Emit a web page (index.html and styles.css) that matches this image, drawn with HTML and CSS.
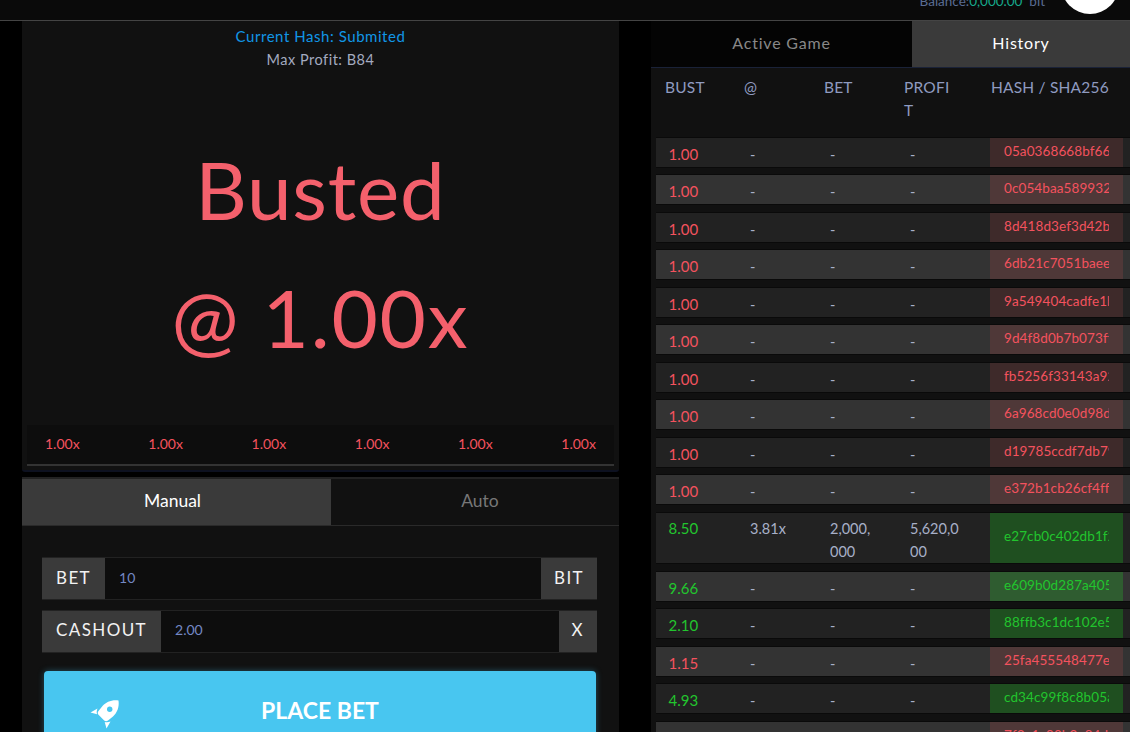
FILE: index.html
```html
<!DOCTYPE html>
<html lang="en">
<head>
<meta charset="utf-8">
<title>Crash game</title>
<link rel="stylesheet" href="styles.css">
</head>
<body>
<header class="topbar">
  <div class="balance">Balance:<span class="balance-num">0,000.00</span>&nbsp; bit</div>
  <div class="avatar"></div>
</header>
<main class="layout">
  <section class="left">
    <div class="game-panel">
      <div class="hash-line">Current Hash: Submited</div>
      <div class="profit-line">Max Profit: B84</div>
      <div class="busted">Busted</div>
      <div class="busted at">@ 1.00x</div>
      <div class="recent">
        <span>1.00x</span><span>1.00x</span><span>1.00x</span><span>1.00x</span><span>1.00x</span><span>1.00x</span>
      </div>
    </div>
    <div class="bet-panel">
      <div class="tabs bet-tabs">
        <div class="tab on">Manual</div>
        <div class="tab">Auto</div>
      </div>
      <div class="form">
        <div class="group">
          <div class="addon">BET</div>
          <div class="field">10</div>
          <div class="addon">BIT</div>
        </div>
        <div class="group">
          <div class="addon">CASHOUT</div>
          <div class="field">2.00</div>
          <div class="addon">X</div>
        </div>
        <div class="place">
          <svg class="rocket" viewBox="0 0 32 32" aria-hidden="true">
            <path fill="#fff" d="M29.500 2.500C23 1.500 17 4 13.500 8L9.500 13c-1 1.200-1 2.700 0 3.800l5.700 5.700c1.100 1 2.600 1 3.800 0l5-4C28 15 30.500 9 29.500 2.500z"/>
            <circle cx="20.700" cy="11.300" r="2.700" fill="#48c6f0"/>
            <path fill="#fff" d="M8.500 10.500 1.500 14.500l6.500 1.800c-.5-2-.3-4 .5-5.800zM21.500 23.500l-4 7-1.800-6.500c2 .5 4 .3 5.800-.5z"/>
          </svg>
          <span class="place-label">PLACE BET</span>
        </div>
      </div>
    </div>
  </section>
  <section class="right">
    <div class="tabs side-tabs">
      <div class="tab">Active Game</div>
      <div class="tab on">History</div>
    </div>
    <div class="history">
      <div class="head">
        <div class="c1">BUST</div><div class="c2">@</div><div class="c3">BET</div><div class="c4">PROFI<br>T</div><div class="c5">HASH / SHA256</div>
      </div>
      <div class="row lose"><div class="c1">1.00</div><div class="c2">-</div><div class="c3">-</div><div class="c4">-</div><div class="c5"><span>05a0368668bf66b9c1e2d4</span></div></div>
      <div class="row lose"><div class="c1">1.00</div><div class="c2">-</div><div class="c3">-</div><div class="c4">-</div><div class="c5"><span>0c054baa589932e7a1f0c3</span></div></div>
      <div class="row lose"><div class="c1">1.00</div><div class="c2">-</div><div class="c3">-</div><div class="c4">-</div><div class="c5"><span>8d418d3ef3d42b27c9a0e1</span></div></div>
      <div class="row lose"><div class="c1">1.00</div><div class="c2">-</div><div class="c3">-</div><div class="c4">-</div><div class="c5"><span>6db21c7051baeef3d8b2a4</span></div></div>
      <div class="row lose"><div class="c1">1.00</div><div class="c2">-</div><div class="c3">-</div><div class="c4">-</div><div class="c5"><span>9a549404cadfe1b7c3d2f0</span></div></div>
      <div class="row lose"><div class="c1">1.00</div><div class="c2">-</div><div class="c3">-</div><div class="c4">-</div><div class="c5"><span>9d4f8d0b7b073ff1a2e6c9</span></div></div>
      <div class="row lose"><div class="c1">1.00</div><div class="c2">-</div><div class="c3">-</div><div class="c4">-</div><div class="c5"><span>fb5256f33143a92c0d7e1b</span></div></div>
      <div class="row lose"><div class="c1">1.00</div><div class="c2">-</div><div class="c3">-</div><div class="c4">-</div><div class="c5"><span>6a968cd0e0d98d4b1f3a27</span></div></div>
      <div class="row lose"><div class="c1">1.00</div><div class="c2">-</div><div class="c3">-</div><div class="c4">-</div><div class="c5"><span>d19785ccdf7db79c2e0a41</span></div></div>
      <div class="row lose"><div class="c1">1.00</div><div class="c2">-</div><div class="c3">-</div><div class="c4">-</div><div class="c5"><span>e372b1cb26cf4ff5a90d13</span></div></div>
      <div class="row win tall"><div class="c1">8.50</div><div class="c2">3.81x</div><div class="c3">2,000,<br>000</div><div class="c4">5,620,0<br>00</div><div class="c5"><span>e27cb0c402db1f2a7d3e85</span></div></div>
      <div class="row win"><div class="c1">9.66</div><div class="c2">-</div><div class="c3">-</div><div class="c4">-</div><div class="c5"><span>e609b0d287a405c1f7e2b9</span></div></div>
      <div class="row win"><div class="c1">2.10</div><div class="c2">-</div><div class="c3">-</div><div class="c4">-</div><div class="c5"><span>88ffb3c1dc102e51f0a7d4</span></div></div>
      <div class="row lose"><div class="c1">1.15</div><div class="c2">-</div><div class="c3">-</div><div class="c4">-</div><div class="c5"><span>25fa455548477ef8c1d0b3</span></div></div>
      <div class="row win"><div class="c1">4.93</div><div class="c2">-</div><div class="c3">-</div><div class="c4">-</div><div class="c5"><span>cd34c99f8c8b05a2e7f1c6</span></div></div>
      <div class="row lose"><div class="c1">1.00</div><div class="c2">-</div><div class="c3">-</div><div class="c4">-</div><div class="c5"><span>7f3a1c90b2e84d6a51c0ef</span></div></div>
    </div>
  </section>
</main>
</body>
</html>
```
FILE: styles.css
```css
* { box-sizing: border-box; }
html, body { margin: 0; height: 732px; overflow: hidden; }
body { background: #000; color: #8f9bc0; font-family: Lato, "Noto Sans", sans-serif; width: 1130px; }

.topbar { height: 21px; background: #0a0a0a; border-bottom: 1px solid #444; display: flex; justify-content: flex-end; align-items: flex-end; padding-right: 11px; }
.balance { font-size: 13.500px; line-height: 16px; margin-bottom: 11px; margin-right: 16px; color: #5a6d94; white-space: nowrap; }
.balance-num { color: #17a98b; }
.avatar { width: 58px; height: 58px; border-radius: 50%; background: #fff; flex: none; margin-bottom: 6px; }

.layout { display: flex; padding-left: 22px; gap: 32px; }
.left { width: 597px; flex: none; }
.right { flex: 1; min-width: 0; }

.game-panel { height: 451px; background: #111; border-bottom: 2px solid #0d1120; border-radius: 0 0 3px 3px; padding: 5px 5px 0; text-align: center; display: flex; flex-direction: column; }
.hash-line { font-size: 15px; line-height: 20px; color: #1196e6; letter-spacing: .55px; }
.profit-line { font-size: 14.500px; line-height: 20px; margin-top: 4px; color: #a4abc0; letter-spacing: .5px; }
.busted { font-size: 80px; line-height: 130px; color: #f4606c; margin-top: 54px; letter-spacing: .8px; }
.at { margin-top: -2px; letter-spacing: 1.800px; }
.recent { margin-top: auto; margin-bottom: 4px; height: 41px; background: #0d0d0d; border-bottom: 2px solid #333; display: flex; justify-content: space-between; align-items: center; padding: 0 18px 2px; font-size: 14px; color: #f4525e; }

.bet-panel { margin-top: 5px; background: #111; border-top: 2px solid #222; height: 300px; }
.tabs { display: flex; }
.tab { display: flex; align-items: center; justify-content: center; }
.bet-tabs { height: 47px; border-bottom: 1px solid #2a2a2a; font-size: 17.500px; color: #777; }
.bet-tabs .tab { width: 309px; padding-bottom: 3px; padding-right: 8px; }
.bet-tabs .tab + .tab { flex: 1; padding-right: 0; padding-left: 10px; }
.tab.on { background: #3a3a3a; color: #fff; }

.form { padding: 31px 22px 0 20px; }
.group { display: flex; height: 43px; margin-bottom: 9.500px; border: 1px solid #222; border-left: 0; border-right: 0; }
.addon { background: #3a3a3a; color: #f2f2f2; font-size: 17px; letter-spacing: 1.400px; display: flex; align-items: center; padding: 0 14px 3px; white-space: nowrap; }
.addon:last-child { padding: 0 13px 3px; }
.field { flex: 1; background: #0d0d0d; color: #7488c4; font-size: 14px; display: flex; align-items: center; padding: 0 0 3px 14px; }
.place { margin: 18px 1px 0 2px; height: 90px; background: #48c6f0; border-radius: 4px; box-shadow: 0 0 6px rgba(72, 198, 240, .35); display: flex; justify-content: center; padding-top: 24px; position: relative; color: #fff; }
.place-label { font-size: 23px; line-height: 30px; font-weight: 700; }
.rocket { position: absolute; left: 45px; top: 27px; width: 32px; height: 32px; }

.side-tabs { height: 46px; font-size: 16px; letter-spacing: .8px; color: #888; }
.side-tabs .tab { width: 261px; background: #040404; padding-bottom: 3px; }
.side-tabs .tab.on { flex: 1; background: #3a3a3a; color: #fff; }

.history { height: 665px; background: #111; border-top: 1px solid #1a2238; padding-left: 5px; }
.head { display: flex; height: 68.800px; color: #8f9bc0; font-size: 15.500px; line-height: 23px; padding-top: 8px; letter-spacing: .2px; }
.head .c1 { padding-left: 9px; }
.head .c2, .head .c3, .head .c4 { padding-left: 8px; }
.head .c5 { padding-left: 1px; white-space: nowrap; }
.c1, .c2, .c3 { width: 80px; flex: none; }
.c4 { width: 94px; flex: none; }
.c5 { width: 133px; flex: none; }
.row { display: flex; min-height: 31px; margin-bottom: 6.500px; font-size: 14.500px; line-height: 23px; border-top: 1px solid #0a0a0a; border-bottom: 1px solid #0a0a0a; background: #222; color: #a8b0c8; }
.row:nth-child(odd) { background: #333; }
.row.tall { margin-bottom: 7px; }
.row .c1 { padding: 5px 0 0 12.500px; font-size: 15px; }
.row .c2, .row .c3, .row .c4 { padding: 5px 0 0 14px; }
.row.tall .c1, .row.tall .c2, .row.tall .c3, .row.tall .c4 { padding-top: 4px; }
.row .c5 { padding: 0 14px 2px; display: flex; align-items: center; overflow: hidden; font-size: 13.500px; letter-spacing: .1px; white-space: nowrap; }
.row .c5 span { display: block; overflow: hidden; width: 105px; }
.lose .c1, .lose .c5 { color: #f4525e; }
.win .c1, .win .c5 { color: #22c52e; }
.lose .c5 { background: #3e2a2a; }
.lose:nth-child(odd) .c5 { background: #4f3838; }
.win .c5 { background: #1f4f20; }
.win:nth-child(odd) .c5 { background: #2f5c30; }
```
